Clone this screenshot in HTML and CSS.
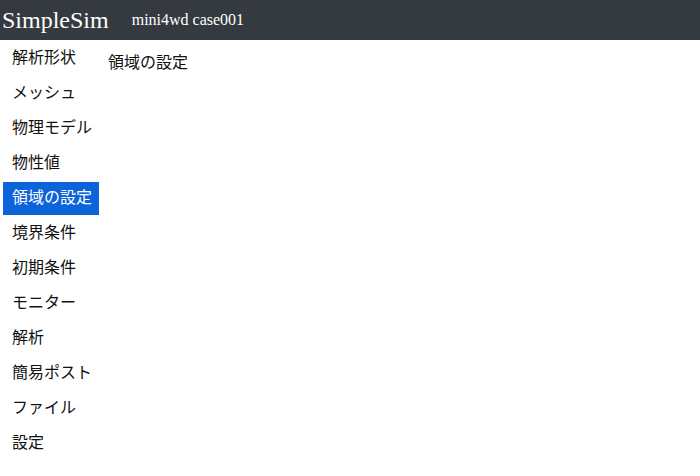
FILE: index.html
```html
<!DOCTYPE html>
<html lang="ja">
<head>
  <meta charset="UTF-8" />
  <meta name="viewport" content="width=device-width, initial-scale=1.0" />
  <title>SimpleSim</title>
  <link rel="stylesheet" href="styles.css">
</head>
<body>
  <header class="top-bar">
    <span class="brand">SimpleSim</span>
    <span class="case-name">mini4wd case001</span>
  </header>

  <div class="layout">
    <nav class="side-nav">
      <a class="nav-item">解析形状</a>
      <a class="nav-item">メッシュ</a>
      <a class="nav-item">物理モデル</a>
      <a class="nav-item">物性値</a>
      <a class="nav-item active">領域の設定</a>
      <a class="nav-item">境界条件</a>
      <a class="nav-item">初期条件</a>
      <a class="nav-item">モニター</a>
      <a class="nav-item">解析</a>
      <a class="nav-item">簡易ポスト</a>
      <a class="nav-item">ファイル</a>
      <a class="nav-item">設定</a>
    </nav>

    <main class="content">
      <div class="page-title">領域の設定</div>
    </main>
  </div>
</body>
</html>
```

FILE: styles.css
```css
* {
  box-sizing: border-box;
}

body {
  margin: 0;
  background: #fff;
  color: #111;
  font-family: 'Noto Sans CJK JP', 'Noto Sans', sans-serif;
  font-size: 16px;
}

.top-bar {
  height: 40px;
  background: #343a40;
  color: #fff;
  display: flex;
  align-items: center;
  padding: 0 2px;
  font-family: 'Liberation Serif', serif;
}

.brand {
  font-size: 24px;
  margin-right: 23px;
}

.case-name {
  font-size: 16px;
}

.layout {
  display: flex;
}

.side-nav {
  display: flex;
  flex-direction: column;
  gap: 2px;
  padding: 2px 0 0 3px;
}

.nav-item {
  display: block;
  height: 33px;
  line-height: 29px;
  padding: 0 7px 4px 9px;
  color: #111;
  cursor: pointer;
  white-space: nowrap;
}

.nav-item.active {
  background: #0d63da;
  color: #fff;
}

.content {
  padding: 7px 0 0 9px;
}

.page-title {
  line-height: 28px;
}
```
